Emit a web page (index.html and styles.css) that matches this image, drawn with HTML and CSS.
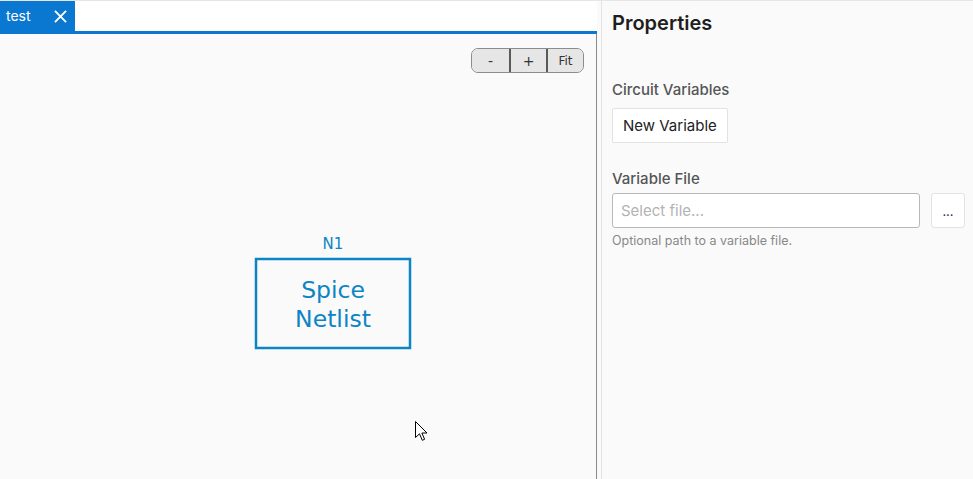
FILE: index.html
```html
<!DOCTYPE html>
<html>
<head>
    <title>test - Circuit Editor</title>
    <link rel="stylesheet" href="styles.css">
</head>
<body>
    <div class="app">
        <div class="editor">
            <div class="tabbar">
                <div class="tab">
                    <span class="tab-title">test</span>
                    <svg class="tab-close" width="14" height="14" viewBox="0 0 14 14">
                        <path d="M1 1 L13 13 M13 1 L1 13" stroke="#fff" stroke-width="2" fill="none"/>
                    </svg>
                </div>
            </div>
            <div class="canvas">
                <div class="zoom-controls">
                    <button class="zoom-btn">-</button>
                    <button class="zoom-btn">+</button>
                    <button class="zoom-btn fit">Fit</button>
                </div>
                <svg class="diagram" width="596" height="445">
                    <text x="333" y="215" class="node-id" text-anchor="middle">N1</text>
                    <rect x="256" y="225" width="154" height="89" class="node-box"/>
                    <text x="333" y="264" class="node-label" text-anchor="middle">Spice</text>
                    <text x="333" y="293" class="node-label" text-anchor="middle">Netlist</text>
                </svg>
                <svg class="cursor" width="14" height="22" viewBox="0 0 14 22">
                    <path d="M0.5 0.5 L0.5 16.5 L4.5 12.8 L7.3 19.3 L9.6 18.3 L6.9 12 L12 12 Z" fill="#fff" stroke="#000" stroke-width="1"/>
                </svg>
            </div>
        </div>
        <div class="splitter"></div>
        <div class="panel">
            <h2 class="panel-title">Properties</h2>

            <div class="section">
                <div class="section-label">Circuit Variables</div>
                <button class="btn">New Variable</button>
            </div>

            <div class="section file-section">
                <div class="section-label">Variable File</div>
                <div class="file-row">
                    <input type="text" class="file-input" placeholder="Select file...">
                    <button class="btn browse">...</button>
                </div>
                <div class="hint">Optional path to a variable file.</div>
            </div>
        </div>
    </div>
</body>
</html>
```

FILE: styles.css
```css
body {
    margin: 0;
    font-family: Inter, "Noto Sans", sans-serif;
    background-color: #fafafa;
    border-top: 1px solid #e6e6e6;
    overflow: hidden;
}
.app {
    display: flex;
    height: 478px;
}
.editor {
    width: 597px;
    display: flex;
    flex-direction: column;
}
.tabbar {
    height: 30px;
    border-bottom: 3px solid #0a78d0;
    background-color: #fff;
    display: flex;
}
.tab {
    background-color: #0a78d0;
    color: #fff;
    width: 75px;
    display: flex;
    align-items: center;
    padding-left: 6px;
    box-sizing: border-box;
    font-size: 14px;
}
.tab-title {
    flex: 1;
    margin-top: -1px;
}
.tab-close {
    margin-right: 8px;
    width: 13px;
    height: 13px;
}
.canvas {
    flex: 1;
    position: relative;
    border-right: 1px solid #8a8a8a;
    background-color: #fafafa;
    overflow: hidden;
}
.zoom-controls {
    position: absolute;
    top: 14px;
    right: 12px;
    display: flex;
    border: 1px solid #8c8c8c;
    border-radius: 7px;
    overflow: hidden;
    background-color: #e6e6e6;
}
.zoom-btn {
    width: 37px;
    height: 23px;
    border: none;
    border-left: 2px solid #5a5a5a;
    background-color: #e6e6e6;
    font-family: "DejaVu Sans", sans-serif;
    font-size: 14px;
    color: #333;
    padding: 0;
}
.zoom-btn:first-child {
    border-left: none;
}
.zoom-btn.fit {
    font-size: 12px;
}
.diagram {
    display: block;
}
.node-id {
    font-family: "DejaVu Sans", sans-serif;
    font-size: 15px;
    fill: #0b85c4;
}
.node-box {
    fill: none;
    stroke: #0b85c4;
    stroke-width: 2.5;
}
.node-label {
    font-family: "DejaVu Sans", sans-serif;
    font-size: 23.5px;
    fill: #0b85c4;
}
.cursor {
    position: absolute;
    left: 415px;
    top: 387px;
}
.splitter {
    width: 4px;
}
.panel {
    flex: 1;
    border-left: 1px solid #e3e3e3;
    padding: 0 8px 0 10px;
}
.panel-title {
    margin: 10px 0 0 0;
    font-size: 20px;
    font-weight: 600;
    color: #1e1e1e;
}
.section {
    margin-top: 45px;
}
.section-label {
    font-size: 15px;
    font-weight: 500;
    color: #555;
    margin-bottom: 9px;
}
.file-section {
    margin-top: 26px;
}
.file-section .section-label {
    margin-bottom: 5px;
}
.btn {
    font-family: Inter, "Noto Sans", sans-serif;
    font-size: 15px;
    color: #222;
    background-color: #fff;
    border: 1px solid #e2e2e2;
    border-radius: 2px;
    height: 35px;
    padding: 0 10px;
}
.file-row {
    display: flex;
    gap: 11px;
}
.file-input {
    flex: 1;
    height: 35px;
    box-sizing: border-box;
    border: 1px solid #b8b8b8;
    border-radius: 3px;
    padding: 0 8px;
    font-family: Inter, "Noto Sans", sans-serif;
    font-size: 15px;
    background-color: #fff;
}
.file-input::placeholder {
    color: #b3b3b3;
}
.btn.browse {
    width: 34px;
    padding: 0;
    border-radius: 3px;
    font-size: 13px;
    color: #334;
}
.hint {
    font-size: 12.5px;
    color: #888;
    margin-top: 5px;
}
```
